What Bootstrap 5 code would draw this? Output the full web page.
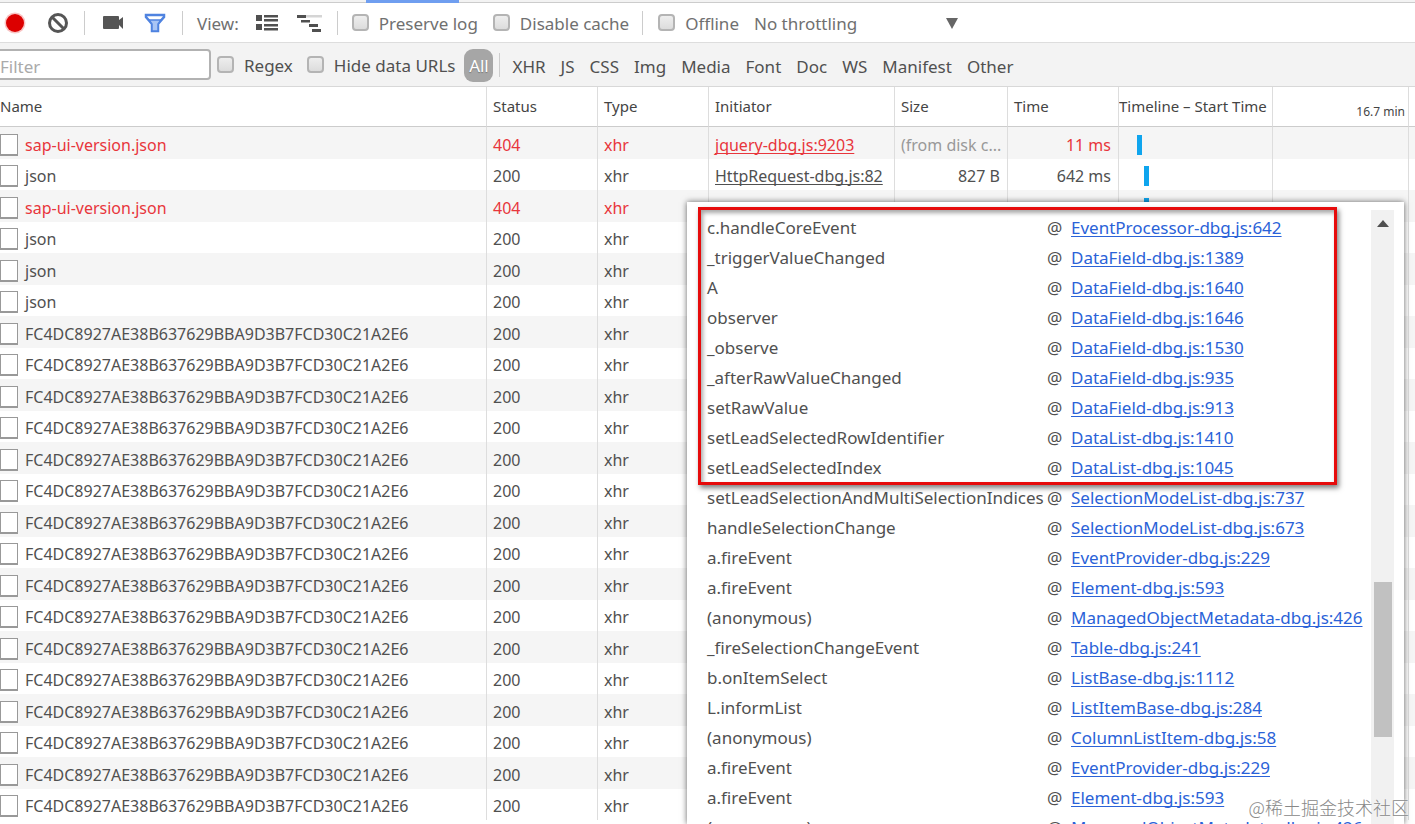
<!DOCTYPE html>
<html lang="en">
<head>
<meta charset="utf-8">
<meta name="viewport" content="width=device-width, initial-scale=1">
<title>Network</title>
<link href="https://cdn.jsdelivr.net/npm/bootstrap@5.3.0/dist/css/bootstrap.min.css" rel="stylesheet">
<style>
  body { font-family: "Noto Sans", "Noto Sans CJK SC", sans-serif; font-size: 17px; line-height: 24px; color: #505050; background: #fff; }
  a { text-decoration-skip-ink: none; }
  .tab-strip { height: 3px; background: #f3f3f3; border-bottom: 1px solid #ccc; }
  .tab-active { width: 93px; height: 3px; margin-left: 366px; background: #6f9ef0; position: relative; }
  .tool-row { height: 40px; border-bottom: 1px solid #ddd; color: #707070; }
  .filter-row { height: 44px; background: #f3f3f3; border-bottom: 1px solid #d8d8d8; }
  .sep { width: 1px; height: 24px; background: #ccc; flex: none; }
  .icon-btn { border: 0; background: none; padding: 0; display: flex; flex: none; }
  .tick { display: flex; align-items: center; gap: 10px; padding-top: 2px; white-space: nowrap; }
  .tick input { appearance: none; width: 17px; height: 17px; margin: 0 0 3px; flex: none; border: 2px solid #b4b4b4; border-radius: 4px; background: linear-gradient(#eee, #dcdcdc); }
  .throttle { appearance: none; border: 0; background: none; padding: 2px 0 0; width: 204px; color: #707070; }
  .throttle-arrow { right: 0; top: 8px; pointer-events: none; }
  .filter-box { width: 211px; height: 31px; border: 2px solid #b2b2b2; border-left: 0; border-radius: 0 4px 4px 0; padding: 4px 0 0; background: #fff; }
  .filter-box::placeholder { color: #aaa; opacity: 1; }
  .kind { border: 0; background: none; padding: 4px 0 0; color: #505050; }
  .kind-all { width: 29px; height: 33px; margin-top: 2px; padding: 0; border-radius: 9px; background: #a6a6a6; color: #fff; text-shadow: 0 1px 1px #777; }
  .pane { min-height: 0; overflow: hidden; }
  .log { table-layout: fixed; width: 100%; border-collapse: separate; border-spacing: 0; font-size: 16px; }
  .log th { height: 40px; font-weight: 400; font-size: 15px; color: #444; border-bottom: 1px solid #ccc; }
  .log th, .log td { padding: 0 7px 2px 6px; white-space: nowrap; overflow: hidden; border-right: 1px solid #ddd; }
  .log td { height: 31px; line-height: 28px; padding-top: 3px; padding-bottom: 0; }
  .log tr > :first-child { padding-left: 0; }
  .log tr > :nth-child(7) { padding-left: 0; padding-right: 0; }
  .log tr > :last-child { border-right: 0; }
  .log tbody tr:nth-child(odd) td { height: 32px; background: #f5f5f5; }
  .log .failed td { color: #e8363c; }
  .log .failed td.cached { color: #999; padding-right: 0; }
  .log td a { color: inherit; text-underline-offset: 2px; }
  .log th.scale { font-size: 12px; padding: 11px 3px 0 0; }
  .row-tick { appearance: none; display: block; width: 18px; height: 22px; margin: 0 7px 0 0; flex: none; background: #fff; border: 1px solid #999; border-bottom-width: 2px; }
  .span-bar { width: 5px; height: 20px; background: #0fa5ee; }
  .stack { top: 115px; bottom: 0; left: 687px; right: 11px; overflow: hidden; background: #fff; box-shadow: 0 0 6px rgba(0,0,0,.6); padding: 11px 0 0 20px; }
  .frames td { height: 30px; line-height: 30px; padding: 0; white-space: nowrap; color: #505050; }
  .frames td:nth-child(1) { width: 340px; }
  .frames td:nth-child(2) { width: 24px; }
  .frames a { color: #2a62d8; text-underline-offset: 2px; }
  .callout { top: 5px; left: 11px; right: 67px; height: 278px; border: 3px solid #e60b0b; box-shadow: 2px 3px 5px rgba(0,0,0,.5), inset 2px 3px 4px rgba(0,0,0,.35); pointer-events: none; }
  .scroll-track { top: 8px; bottom: 0; right: 10px; width: 23px; background: #f1f1f1; }
  .scroll-thumb { height: 155px; width: 18px; margin: 372px auto 0; background: #c1c1c1; }
  .scroll-up { top: 10px; left: 6px; }
  .watermark { right: 6px; bottom: 4px; font: 300 18px/26px "Noto Sans CJK SC", sans-serif; color: #888; text-shadow: 0 0 2px #fff; }
</style>
</head>
<body class="vh-100 d-flex flex-column overflow-hidden">
  <div class="tab-strip flex-shrink-0"><div class="tab-active"></div></div>

  <div class="tool-row d-flex align-items-center flex-shrink-0">
    <button class="icon-btn ms-1" aria-label="Record"><svg width="22" height="22"><circle cx="11" cy="11" r="10.500" fill="#f9c4c4"/><circle cx="11" cy="11" r="9" fill="#dc0000"/></svg></button>
    <button class="icon-btn" style="margin-left:21px" aria-label="Clear"><svg width="22" height="22" fill="none" stroke="#555" stroke-width="3"><circle cx="11" cy="11" r="8.500"/><path d="M5 5l12 12"/></svg></button>
    <span class="sep" style="margin-left:15px"></span>
    <button class="icon-btn" style="margin-left:18px" aria-label="Capture screenshots"><svg width="21" height="16" fill="#555"><path d="M1 1h14q1 0 1 1v3l4-3v12l-4-4v3q0 1-1 1H1q-1 0-1-1V2q0-1 1-1z"/></svg></button>
    <button class="icon-btn ms-3" style="padding-left:4px" aria-label="Filter"><svg width="22" height="20"><path d="M2 2h18v2l-6 7v7H8v-7L2 4z" fill="#fff" stroke="#4f83e0" stroke-width="2.500"/><path d="M5 7h12l-3 4v7H8v-7z" fill="#a9c5f5" stroke="#4f83e0" stroke-width="1.500"/></svg></button>
    <span class="sep ms-3"></span>
    <span style="margin-left:14px;padding-top:2px">View:</span>
    <button class="icon-btn" style="margin-left:17px" aria-label="Large rows"><svg width="22" height="17" fill="#505050"><path d="M0 1h6v6H0zM8 1h14v2.500H8zM8 5h14v2.500H8zM0 10h6v6H0zM8 10h14v2.500H8zM8 14h14v2.500H8z"/></svg></button>
    <button class="icon-btn" style="margin-left:19px" aria-label="Waterfall"><svg width="26" height="18" fill="#505050"><path d="M9 1h16v2.500H9z" fill="#d5d5d5"/><path d="M0 1h9v3H0zM4 6h9v2.500H4zM12 10h9v3h-9zM15 15h9v3h-9z"/></svg></button>
    <span class="sep" style="margin-left:14px"></span>
    <label class="tick" style="margin-left:14px"><input type="checkbox">Preserve log</label>
    <label class="tick" style="margin-left:15px"><input type="checkbox">Disable cache</label>
    <span class="sep" style="margin-left:13px"></span>
    <label class="tick" style="margin-left:15px"><input type="checkbox">Offline</label>
    <div class="position-relative" style="margin-left:15px">
      <select class="throttle" aria-label="Throttling"><option>No throttling</option></select>
      <svg class="throttle-arrow position-absolute" width="12" height="12" fill="#666"><path d="M0 0h12L6 11z"/></svg>
    </div>
  </div>

  <div class="filter-row d-flex align-items-center flex-shrink-0">
    <input class="filter-box" type="text" placeholder="Filter" aria-label="Filter">
    <label class="tick" style="margin-left:6px"><input type="checkbox">Regex</label>
    <label class="tick" style="margin-left:14px"><input type="checkbox">Hide data URLs</label>
    <button class="kind kind-all" style="margin-left:9px">All</button>
    <span class="sep" style="margin-left:6px"></span>
    <div class="d-flex" style="gap:15px;margin-left:12px">
      <button class="kind">XHR</button><button class="kind">JS</button><button class="kind">CSS</button><button class="kind">Img</button><button class="kind">Media</button><button class="kind">Font</button><button class="kind">Doc</button><button class="kind">WS</button><button class="kind">Manifest</button><button class="kind">Other</button>
    </div>
  </div>

  <main class="pane flex-grow-1 position-relative">
    <table class="log">
      <colgroup><col style="width:487px"><col style="width:111px"><col style="width:111px"><col style="width:186px"><col style="width:113px"><col style="width:111px"><col style="width:154px"><col><col style="width:6px"></colgroup>
      <thead><tr><th>Name</th><th>Status</th><th>Type</th><th>Initiator</th><th>Size</th><th>Time</th><th>Timeline – Start Time</th><th class="scale text-end">16.7 min</th><th></th></tr></thead>
      <tbody id="requests"></tbody>
    </table>

    <section class="stack position-absolute" aria-label="Call stack">
      <table class="frames"><tbody id="frames"></tbody></table>
      <div class="callout position-absolute"></div>
      <div class="scroll-track position-absolute">
        <svg class="scroll-up position-absolute" width="12" height="7" fill="#505050"><path d="M0 7h12L6 0z"/></svg>
        <div class="overflow-hidden"><div class="scroll-thumb"></div></div>
      </div>
    </section>
    <div class="watermark position-absolute">@稀土掘金技术社区</div>
  </main>

<script src="https://cdn.jsdelivr.net/npm/bootstrap@5.3.0/dist/js/bootstrap.bundle.min.js"></script>
<script>
  const hash = 'FC4DC8927AE38B637629BBA9D3B7FCD30C21A2E6';
  // name, status, initiator, size, time, bar start
  const requests = [
    ['sap-ui-version.json', 404, 'jquery-dbg.js:9203', '(from disk c...', '11 ms', 18],
    ['json', 200, 'HttpRequest-dbg.js:82', '827 B', '642 ms', 25],
    ['sap-ui-version.json', 404, '', '', '', 25],
    ['json', 200], ['json', 200], ['json', 200],
    ...Array.from({ length: 16 }, () => [hash, 200])
  ];
  document.getElementById('requests').innerHTML = requests.map(([name, status, from = '', size = '', time = '', start]) => `
    <tr class="${status === 404 ? 'failed' : ''}">
      <td><label class="d-flex align-items-center"><input class="row-tick" type="checkbox">${name}</label></td>
      <td>${status}</td><td>xhr</td>
      <td>${from ? `<a href="#">${from}</a>` : ''}</td>
      <td class="${size.startsWith('(') ? 'cached' : 'text-end'}">${size}</td>
      <td class="text-end">${time}</td>
      <td>${start ? `<div class="span-bar" style="margin-left:${start}px"></div>` : ''}</td><td></td><td></td>
    </tr>`).join('');

  const frames = [
    ['c.handleCoreEvent', 'EventProcessor-dbg.js:642'],
    ['_triggerValueChanged', 'DataField-dbg.js:1389'],
    ['A', 'DataField-dbg.js:1640'],
    ['observer', 'DataField-dbg.js:1646'],
    ['_observe', 'DataField-dbg.js:1530'],
    ['_afterRawValueChanged', 'DataField-dbg.js:935'],
    ['setRawValue', 'DataField-dbg.js:913'],
    ['setLeadSelectedRowIdentifier', 'DataList-dbg.js:1410'],
    ['setLeadSelectedIndex', 'DataList-dbg.js:1045'],
    ['setLeadSelectionAndMultiSelectionIndices', 'SelectionModeList-dbg.js:737'],
    ['handleSelectionChange', 'SelectionModeList-dbg.js:673'],
    ['a.fireEvent', 'EventProvider-dbg.js:229'],
    ['a.fireEvent', 'Element-dbg.js:593'],
    ['(anonymous)', 'ManagedObjectMetadata-dbg.js:426'],
    ['_fireSelectionChangeEvent', 'Table-dbg.js:241'],
    ['b.onItemSelect', 'ListBase-dbg.js:1112'],
    ['L.informList', 'ListItemBase-dbg.js:284'],
    ['(anonymous)', 'ColumnListItem-dbg.js:58'],
    ['a.fireEvent', 'EventProvider-dbg.js:229'],
    ['a.fireEvent', 'Element-dbg.js:593'],
    ['(anonymous)', 'ManagedObjectMetadata-dbg.js:426']
  ];
  document.getElementById('frames').innerHTML = frames.map(([fn, at]) =>
    `<tr><td>${fn}</td><td>@</td><td><a href="#">${at}</a></td></tr>`).join('');
</script>
</body>
</html>
